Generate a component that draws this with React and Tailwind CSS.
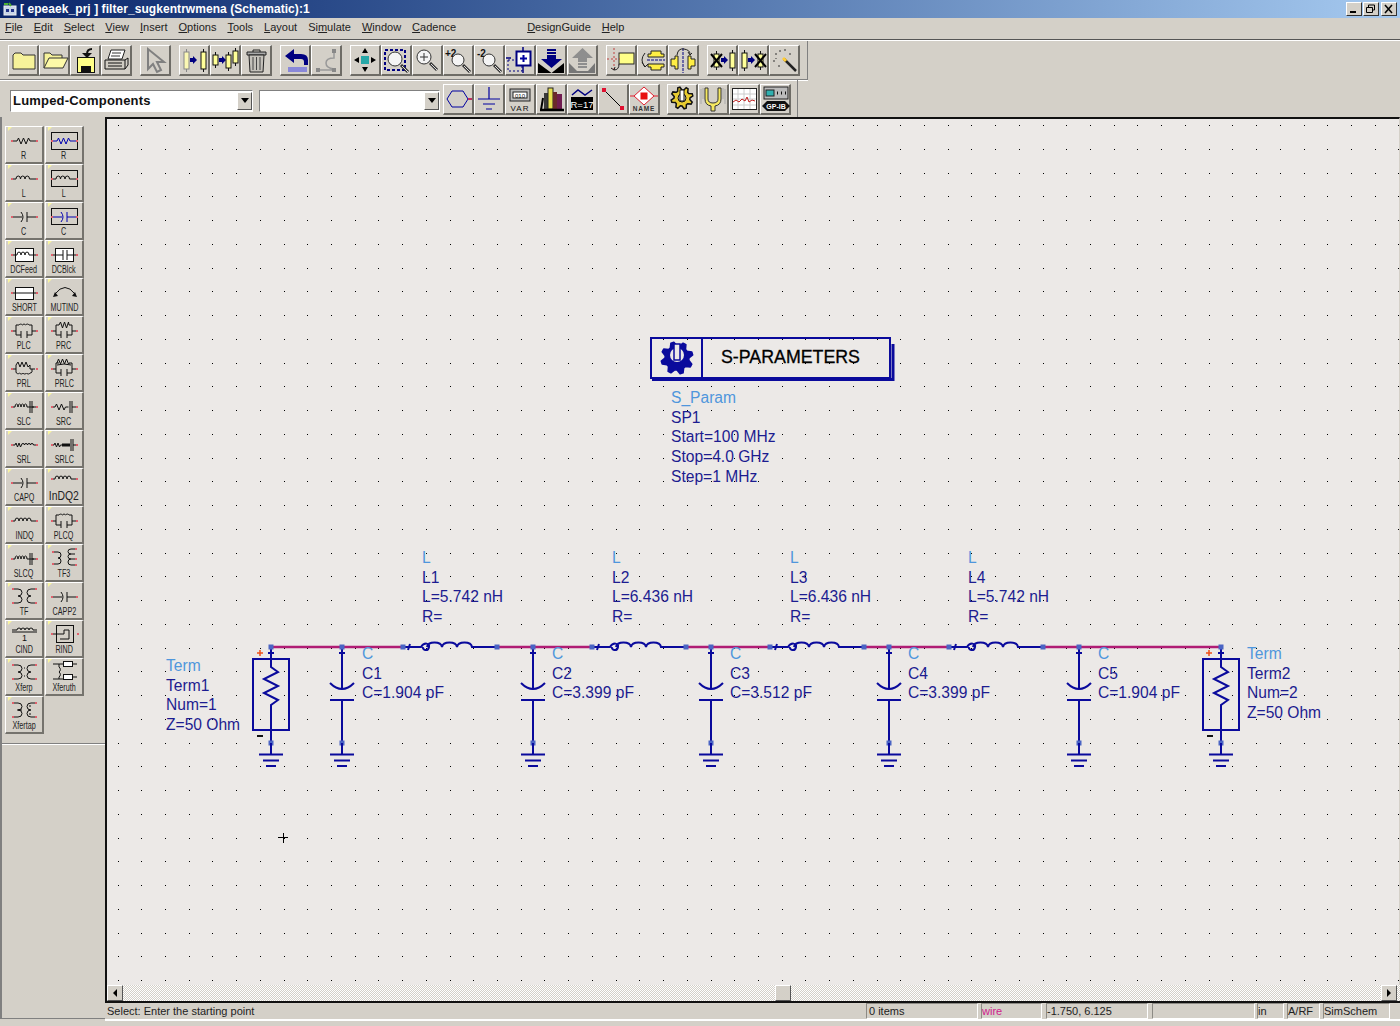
import { Fragment } from 'react'

const NAVY = '#0a0a9c'
const FACE = '#d4d0c8'
const PALE = '#f6f29a'
const PIN = '#e0606c'

// little helpers used by the icon drawings
const gear = (cx, cy, r1, r2, n) => {
  const pts = []
  for (let i = 0; i < n * 4; i++) {
    const a = (i / (n * 4)) * Math.PI * 2 - Math.PI / 8
    const r = i % 4 < 2 ? r2 : r1
    pts.push(`${(cx + r * Math.cos(a)).toFixed(1)},${(cy + r * Math.sin(a)).toFixed(1)}`)
  }
  return pts.join(' ')
}

const Mag = ({ cx = 12, cy = 13, r = 6 }) => (
  <>
    <circle cx={cx} cy={cy} r={r} fill="#f4f4f4" stroke="#333" />
    <path d={`M${cx + r - 1} ${cy + r - 1}l7 7`} stroke="#333" strokeWidth="3" />
    <path d={`M${cx + r} ${cy + r}l6 6`} stroke="#ddd" strokeWidth="1" />
  </>
)

const Cap = ({ x, y, h = 18, w = 5, fill = '#ffff99', stroke = '#111' }) => (
  <>
    <path d={`M${x + w / 2} ${y - 3}V${y + h + 3}`} stroke={stroke} />
    <rect x={x} y={y} width={w} height={h} fill={fill} stroke={stroke} />
  </>
)

const BlueArrow = ({ x = 11, y = 15 }) => (
  <path d={`M${x} ${y - 2}h3v-2l4 4-4 4v-2h-3z`} fill="#000080" />
)

const toolbarIcons = {
  folder: <path d="M5 10l2-2h6l2 2h12v14H5z" fill={PALE} stroke="#333" />,
  open: (
    <>
      <path d="M5 23V8h6l2 2h10v3" fill={PALE} stroke="#333" />
      <path d="M5 23l5-10h19l-5 10z" fill="#fdf9a8" stroke="#333" />
    </>
  ),
  save: (
    <>
      <rect x="7.5" y="12.5" width="17" height="15" fill="#ffff88" stroke="#111" />
      <rect x="11" y="21" width="10" height="7" fill="#111" />
      <path d="M22 4q-5 0-5 5v3" fill="none" stroke="#111" strokeWidth="2" />
      <path d="M12 8l5 5 5-5z" fill="#111" />
    </>
  ),
  print: (
    <>
      <path d="M10 5h14l-3 9H7z" fill="#fff" stroke="#222" />
      <path d="M11 8h9M10 11h9" stroke="#333" />
      <path d="M4 15h20v9H4z" fill="#cfcbc2" stroke="#111" />
      <path d="M24 24l3-4v-7l-3 2M7 18h14M7 21h14" fill="none" stroke="#111" />
    </>
  ),
  pointer: <path d="M8 4v20l5-5 4 8 4-2-4-8h7z" fill={FACE} stroke="#808080" strokeWidth="2" />,
  move1: (
    <>
      <Cap x={5} y={7} h={17} fill="#fbf8b4" stroke="#888" />
      <BlueArrow x={11} />
      <Cap x={22} y={7} h={17} />
    </>
  ),
  move2: (
    <>
      <Cap x={3} y={10} h={10} />
      <BlueArrow x={9} y={15} />
      <Cap x={16} y={10} h={13} />
      <Cap x={23} y={6} h={12} />
    </>
  ),
  trash: (
    <>
      <path d="M6 7h19v3H6z" fill="#aaa" stroke="#222" />
      <path d="M12 7V5h7v2" fill="none" stroke="#222" />
      <path d="M8 10h15l-1 17H9z" fill="#c4c1ba" stroke="#222" />
      <path d="M12 12v13M15.500 12v13M19 12v13" stroke="#444" />
    </>
  ),
  undo: (
    <>
      <path d="M14 4l-9 7 9 7v-4h7q3 0 3 3v3h4v-5q0-6-7-6h-7z" fill="#000080" />
      <path d="M8 22h19v5H8z" fill="#6a6ae0" opacity=".7" />
    </>
  ),
  redo: (
    <>
      <path d="M7 25h15M23 7v6q-8 0-8 5t8 6" fill="none" stroke="#999" strokeWidth="1.500" />
      <rect x="5" y="23" width="4" height="4" fill="#888" />
      <rect x="21" y="23" width="4" height="4" fill="#888" />
      <rect x="21" y="4" width="4" height="4" fill="#888" />
    </>
  ),
  pan: (
    <>
      <rect x="11" y="11" width="8" height="8" fill="#28a8a8" />
      <path d="M15 3l-3 5h6zM15 27l-3-5h6zM4 15l5-3v6zM26 15l-5-3v6z" fill="#000" />
    </>
  ),
  zoomArea: (
    <>
      <rect x="4" y="5" width="20" height="20" fill="none" stroke="#000080" strokeWidth="2" strokeDasharray="3 2" />
      <Mag cx={14} cy={14} r={7} />
    </>
  ),
  zoomIn: (
    <>
      <Mag cx={12} cy={12} r={7} />
      <path d="M8 12h8M12 8v8" stroke="#333" />
    </>
  ),
  zoom2: (
    <>
      <text x="2" y="12" fontSize="10" fontWeight="700" fontFamily="Liberation Sans, sans-serif" fill="#111">+2</text>
      <Mag cx={15} cy={15} r={6} />
    </>
  ),
  zoomOut: (
    <>
      <text x="3" y="12" fontSize="10" fontWeight="700" fontFamily="Liberation Sans, sans-serif" fill="#111">-2</text>
      <Mag cx={15} cy={15} r={6} />
    </>
  ),
  fit: (
    <>
      <rect x="3" y="15" width="14" height="11" fill="none" stroke="#000080" strokeDasharray="2 2" />
      <rect x="11.500" y="6.500" width="14" height="14" fill="#fff" stroke="#000080" strokeWidth="2" />
      <path d="M15 13.500h7M18.500 10v7" stroke="#0000a0" strokeWidth="2" />
      <path d="M1 13h5M18 2v4M18 21v7" stroke="#000080" strokeWidth="1.500" />
    </>
  ),
  pushDown: (
    <>
      <path d="M11 4h9v2h-9zM11 7h9v2h-9zM11 10h9v4h6L15.500 23 5 14h6z" fill="#000080" />
      <path d="M2 18l13.500 10L28 18v10H2z" fill="#000" />
    </>
  ),
  popUp: (
    <>
      <path d="M15.500 3L26 13h-6v4h-9v-4H5z" fill="#8e8e8e" />
      <path d="M11 18h9v2h-9zM11 21h9v2h-9z" fill="#8e8e8e" />
      <path d="M2 18l8 8h11l7-8v10H2z" fill="#777" />
    </>
  ),
  snapPin: (
    <>
      <rect x="13" y="8" width="15" height="11" fill="#ffff88" stroke="#222" />
      <path d="M1 14h13M8 3v24" stroke="#c04040" strokeDasharray="2 2" />
      <path d="M13 19q0 6-5 6M5 23l3 2 1-3" fill="none" stroke="#222" />
    </>
  ),
  rotate: (
    <>
      <path d="M14 6h10v3h3v3H11V9h3zM11 19h16v3h-3v3H14v-3h-3z" fill="#ffee44" stroke="#222" />
      <path d="M10 15h18" stroke="#000080" strokeDasharray="3 1" />
      <path d="M8 8q-6 7 0 14M5 17l3 5 3-3" fill="none" stroke="#222" />
    </>
  ),
  flip: (
    <>
      <path d="M3 14h4v-3h3v13H7v-3H3zM27 14h-4v-3h-3v13h3v-3h4z" fill="#ffee44" stroke="#222" />
      <path d="M15 3v25" stroke="#000080" strokeDasharray="3 1" />
      <path d="M9 10q1-7 7-6t6 5M20 7l2 3 2-2" fill="none" stroke="#222" />
    </>
  ),
  deact1: (
    <>
      <Cap x={7} y={9} h={13} />
      <path d="M4 9l11 13M15 9L4 22" stroke="#000" strokeWidth="2" />
      <BlueArrow x={14} />
      <Cap x={23} y={8} h={15} />
    </>
  ),
  deact2: (
    <>
      <Cap x={4} y={8} h={15} />
      <BlueArrow x={10} />
      <Cap x={20} y={9} h={13} />
      <path d="M17 9l11 13M28 9L17 22" stroke="#000" strokeWidth="2" />
    </>
  ),
  wand: (
    <>
      <path d="M15 14l12 12" stroke="#222" strokeWidth="2.500" />
      <path d="M14 13l3 3" stroke="#ffcc33" strokeWidth="3" />
      <path d="M6 9h2M15 5h2M20 9h2M4 16h2M9 21h2M11 5v2M7 13v1" stroke="#333" />
    </>
  ),
  port: (
    <>
      <path d="M4 15l5-8h11l5 8-5 8H9z" fill="none" stroke="#0000a0" />
      <path d="M25 15h4" stroke="#c03060" strokeWidth="2" />
    </>
  ),
  ground: (
    <path d="M15 3v12M4 15h22M9 20h12M12 25h6" stroke="#0000a0" fill="none" strokeWidth="1.200" />
  ),
  var: (
    <>
      <rect x="5" y="5" width="20" height="12" fill="#bbb" stroke="#222" />
      <rect x="8" y="8" width="14" height="6" fill="#fff" stroke="#222" />
      <text x="15" y="13.500" textAnchor="middle" fontSize="6" fontFamily="Liberation Sans, sans-serif" fill="#111">010</text>
      <text x="15" y="27" textAnchor="middle" fontSize="8" letterSpacing="1" fontFamily="Liberation Sans, sans-serif" fill="#111">VAR</text>
    </>
  ),
  books: (
    <>
      <rect x="8" y="9" width="4" height="16" fill="#3a3a3a" />
      <rect x="12" y="4" width="5" height="21" fill="#e8e050" stroke="#222" />
      <rect x="17" y="8" width="4" height="17" fill="#6a2a2a" />
      <rect x="21" y="10" width="5" height="15" fill="#701c50" />
      <path d="M4 26h24" stroke="#000" strokeWidth="2.500" />
      <path d="M7 14l-2 12" stroke="#000" strokeWidth="2" />
    </>
  ),
  rval: (
    <>
      <path d="M5 11l6-5 7 5 7-5" fill="none" stroke="#000080" strokeWidth="1.500" />
      <rect x="4" y="13" width="22" height="13" fill="#000" />
      <text x="15" y="23.500" textAnchor="middle" fontSize="9.500" fontFamily="Liberation Sans, sans-serif" fill="#fff">R=17</text>
    </>
  ),
  line: (
    <>
      <path d="M6 6l18 18" stroke="#000" />
      <rect x="4" y="4" width="4" height="4" fill="#e01030" />
      <rect x="22" y="22" width="4" height="4" fill="#e01030" />
    </>
  ),
  name: (
    <>
      <path d="M15 3l10 9-10 9-10-9z" fill="#fff" stroke="#e02030" />
      <rect x="11.500" y="8.500" width="7" height="7" fill="#e81010" />
      <path d="M1 12h4M25 12h4" stroke="#e02030" />
      <text x="15" y="27" textAnchor="middle" fontSize="6.500" letterSpacing=".8" fontWeight="700" fontFamily="Liberation Sans, sans-serif" fill="#333">NAME</text>
    </>
  ),
  gear: (
    <>
      <polygon points={gear(15, 14, 8, 11, 8)} fill="#e8cc30" stroke="#111" strokeWidth="1.500" />
      <circle cx="15" cy="14" r="4" fill="#e4e0d0" stroke="#111" />
      <rect x="13" y="6" width="4" height="11" fill="#fff" stroke="#111" />
    </>
  ),
  fork: (
    <>
      <path d="M10 4v11q0 4 5 4t5-4V4h3v11q0 6-6 7v5h-4v-5q-6-1-6-7V4z" fill="#f5e860" stroke="#333" />
      <path d="M3 5v15M27 5v15M5 4v11M25 4v11" stroke="#aaa" />
    </>
  ),
  chart: (
    <>
      <rect x="3.500" y="4.500" width="24" height="21" fill="#fff" stroke="#222" />
      <path d="M4 10h23M4 15h23M4 21h23M9 5v20M15 5v20M21 5v20" stroke="#ccc" />
      <path d="M4 18l3-2 3 2 3-3 3 2 2-4 2 5 3-2 3 1" fill="none" stroke="#c02020" />
    </>
  ),
  gpib: (
    <>
      <rect x="4" y="3" width="24" height="12" fill="#bbb" stroke="#222" />
      <rect x="6" y="6" width="8" height="6" fill="#30b0b0" stroke="#222" />
      <path d="M17 9h2M21 9h2M25 9h2" stroke="#111" strokeWidth="3" strokeDasharray="1 1" />
      <path d="M2 22l5-5h18l5 5-5 5H7z" fill="#111" />
      <text x="16" y="25" textAnchor="middle" fontSize="7" fontWeight="700" fontFamily="Liberation Sans, sans-serif" fill="#fff">GP-IB</text>
    </>
  ),
}

const toolbarOne = [
  ['folder', 'open', 'save', 'print'],
  ['pointer'],
  ['move1', 'move2', 'trash'],
  ['undo', 'redo'],
  ['pan', 'zoomArea', 'zoomIn', 'zoom2', 'zoomOut', 'fit', 'pushDown', 'popUp'],
  ['snapPin', 'rotate', 'flip'],
  ['deact1', 'deact2', 'wand'],
]
const toolbarTwoA = ['port', 'ground', 'var', 'books', 'rval', 'line', 'name']
const toolbarTwoB = ['gear', 'fork', 'chart', 'gpib']

function ToolButton({ name }) {
  return (
    <div className="w-[31px] h-[31px] shrink-0 bg-[#d4d0c8] border-t border-l border-t-white border-l-white border-r-2 border-b-2 border-r-[#6e6c66] border-b-[#6e6c66]">
      <svg width="30" height="30" viewBox="0 0 30 30" fill="none" className="-mt-px -ml-px">
        {toolbarIcons[name]}
      </svg>
    </div>
  )
}

// ---- palette ----
const Pin = ({ x, y }) => <path d={`M${x - 1} ${y}h2`} stroke={PIN} strokeWidth="2" />
const Ends = ({ y = 15, a = 7, b = 32 }) => (
  <>
    <Pin x={a} y={y} />
    <Pin x={b} y={y} />
  </>
)
const Res = ({ x = 11, y = 15, c = '#111' }) => (
  <path d={`M${x - 4} ${y}H${x + 1}l1.500-3 2.500 6 2.500-6 2.500 6 2.500-6 1.500 3H${x + 21}`} fill="none" stroke={c} />
)
const Coil = ({ x = 11, y = 15, n = 3, c = '#111', d = 4.500 }) => {
  let s = `M${x - 4} ${y}H${x}`
  for (let i = 0; i < n; i++) s += `a${d / 2} 3 0 0 1 ${d} 0`
  s += `H${x + n * d + 7}`
  return <path d={s} fill="none" stroke={c} />
}
const CapSym = ({ c = '#111', c2 = '#111' }) => (
  <>
    <path d="M7 15H17M16 10q4 5 0 10" fill="none" stroke={c} />
    <path d="M22 10v10M22 15H32" fill="none" stroke={c2} />
  </>
)
const Tank = ({ top }) => (
  <>
    <path d="M7 15h4V9h3M24 9h3v6h5M11 15v4h5M27 15v4h-5" fill="none" stroke="#111" />
    <path d="M16 15v7M22 15v7" stroke="#111" />
    {top}
    <Ends y={15} />
  </>
)
const Xf = ({ mid }) => (
  <>
    <path d="M8 7h5q4 0 4 3.500t-4 3.500q4 0 4 3.500t-4 3.500H8" fill="none" stroke="#111" />
    <path d="M31 7h-5q-4 0-4 3.500t4 3.500q-4 0-4 3.500t4 3.500h5" fill="none" stroke="#111" />
    {mid}
    <Pin x={8} y={7} />
    <Pin x={8} y={21} />
    <Pin x={31} y={7} />
    <Pin x={31} y={21} />
  </>
)

const paletteRows = [
  [
    ['R', <><Res /><Ends /></>],
    ['R', <><rect x="6.500" y="6.500" width="26" height="17" stroke="#111" /><Res c="#0000b0" /><Ends /></>],
  ],
  [
    ['L', <><Coil /><Ends /></>],
    ['L', <><rect x="6.500" y="6.500" width="26" height="16" stroke="#111" /><Coil /><Ends /></>],
  ],
  [
    ['C', <><CapSym /><Ends /></>],
    ['C', <><rect x="6.500" y="6.500" width="26" height="16" stroke="#111" /><CapSym c="#0000b0" c2="#0000b0" /><Ends /></>],
  ],
  [
    ['DCFeed', <><rect x="10.500" y="8.500" width="18" height="13" fill="#fff" stroke="#111" /><Coil x={12} n={3} d={4} /><Ends /></>],
    ['DCBlck', <><rect x="10.500" y="8.500" width="18" height="13" fill="#fff" stroke="#111" /><path d="M6 15h12M18 10v10M22 10v10M22 15h11" stroke="#111" /><Ends /></>],
  ],
  [
    ['SHORT', <><rect x="10.500" y="9.500" width="18" height="12" fill="#fff" stroke="#111" /><path d="M6 15h27" stroke="#111" /><Ends /></>],
    ['MUTIND', <><path d="M10 16q10-13 20 0" stroke="#111" fill="none" /><path d="M8 19l2-5 3 4zM32 19l-2-5-3 4z" fill="#111" /></>],
  ],
  [
    ['PLC', <Tank top={<path d="M14 9a2 2 0 0 1 3.300 0a2 2 0 0 1 3.300 0a2 2 0 0 1 3.400 0" stroke="#111" />} />],
    ['PRC', <Tank top={<path d="M14 9l1.500-3 2 6 2-6 2 6 2-6 .5 3" stroke="#111" />} />],
  ],
  [
    ['PRL', <><path d="M7 15h4V11l2-3 2 5 2-5 2 5 2-5 2 5 2-2v4h5M11 15v3a2 2 0 0 0 3.500 1a2 2 0 0 0 3.500 0a2 2 0 0 0 3.500 0a2 2 0 0 0 3.500 0a2 2 0 0 0 2-1v-3" fill="none" stroke="#111" /><Ends /></>],
    ['PRLC', <Tank top={<path d="M12 9l1.500-4 2 5 2-5 2 5 2-5 2 5 1-1M12 11q7-2 14 0" stroke="#111" />} />],
  ],
  [
    ['SLC', <><Coil x={10} n={4} d={3} /><path d="M25 9v12M27 9v12M27 15h5" stroke="#111" /><Ends /></>],
    ['SRC', <><path d="M7 15h3l1.500-3 2.500 6 2.500-6 2.500 6 1.500-3h3M25 9v12M27 9v12M27 15h5" fill="none" stroke="#111" /><Ends /></>],
  ],
  [
    ['SRL', <><path d="M7 15h3l1-2 1.500 4 1.500-4 1.500 4 1-2a1.500 1.500 0 0 1 3 0a1.500 1.500 0 0 1 3 0a1.500 1.500 0 0 1 3 0a1.500 1.500 0 0 1 3 0h3" fill="none" stroke="#111" /><Ends /></>],
    ['SRLC', <><path d="M7 15h2l1-2 1.500 4 1.500-4 1.500 4 1-2h9M26 9v12M28 9v12M28 15h4" fill="none" stroke="#111" /><path d="M17 13.500h8v3h-8z" fill="#111" /><Ends /></>],
  ],
  [
    ['CAPQ', <><CapSym /><Ends /></>],
    ['InDQ2', <><Coil x={10} y={11} n={4} d={4} /><Ends y={11} /></>],
  ],
  [
    ['INDQ', <><Coil x={10} n={4} d={4} /><Ends /></>],
    ['PLCQ', <Tank top={<path d="M14 9a2 2 0 0 1 3.300 0a2 2 0 0 1 3.300 0a2 2 0 0 1 3.400 0" stroke="#111" />} />],
  ],
  [
    ['SLCQ', <><Coil x={10} n={4} d={3} /><path d="M25 9v12M27 9v12M27 15h5" stroke="#111" /><Ends /></>],
    ['TF3', <><path d="M8 8h5q3 0 3 3t-3 3q3 0 3 3t-3 3H8" fill="none" stroke="#111" /><path d="M30 5h-4q-3 0-3 2.500t3 2.500h4M26 10q-3 0-3 2.500t3 2.500h4M26 15q-3 0-3 3t3 3h4" fill="none" stroke="#111" /><Pin x={8} y={8} /><Pin x={8} y={20} /><Pin x={31} y={5} /><Pin x={31} y={15} /><Pin x={31} y={21} /></>],
  ],
  [
    ['TF', <Xf />],
    ['CAPP2', <><CapSym /><Ends /></>],
  ],
  [
    ['CIND', <><path d="M7 10h5a2 2 0 0 1 4 0a2 2 0 0 1 4 0a2 2 0 0 1 4 0a2 2 0 0 1 4 0h4M7 12h25" fill="none" stroke="#111" /><text x="19.500" y="21" fontSize="9" textAnchor="middle" fontFamily="Liberation Sans, sans-serif" fill="#111">1</text></>],
    ['RIND', <><rect x="11.500" y="5.500" width="17" height="17" fill="none" stroke="#111" /><path d="M7 14h12V10h5v9H15" fill="none" stroke="#111" /><Ends y={14} b={33} /></>],
  ],
  [
    ['Xferp', <Xf mid={<path d="M19 10h2M19 18h2" stroke="#111" strokeDasharray="1 1" />} />],
    ['Xferuth', <><path d="M8 6h6v3a3 3 0 0 1 0 5a3 3 0 0 1 0 5v2H8M14 6h5M14 21h5M28 6h4M28 19h4" fill="none" stroke="#111" /><rect x="18.500" y="3.500" width="9" height="5" fill="#fff" stroke="#111" /><rect x="18.500" y="16.500" width="9" height="5" fill="#fff" stroke="#111" /></>],
  ],
  [
    ['Xfertap', <Xf mid={<path d="M12 14h5M24 10h2M24 18h2" stroke="#111" />} />],
  ],
]

function PaletteButton({ label, icon }) {
  return (
    <div className="relative w-[39px] h-[38px] shrink-0 bg-[#d4d0c8] border-t border-l border-t-white border-l-white border-r-2 border-b-2 border-r-[#75736d] border-b-[#75736d] flex flex-col items-center">
      <svg width="38" height="24" viewBox="0 0 38 24" fill="none" className="-ml-px -mt-px shrink-0">
        <path d="M3 1h4L3 5z" fill="#f8f4a0" />
        {icon}
      </svg>
      {label === 'InDQ2' ? (
        <span className="-mt-[3px] text-[13px] leading-[13px] text-[#222] inline-block scale-x-[0.8] whitespace-nowrap">
          {label}
        </span>
      ) : (
        <span className="mt-0 text-[10px] leading-[11px] text-[#222] inline-block scale-x-[0.72] whitespace-nowrap">
          {label}
        </span>
      )}
    </div>
  )
}

// ---- schematic ----
const DOTS = []
for (let i = 0; i < 55; i++) {
  for (let j = 0; j < 37; j++) {
    DOTS.push(`M${Math.round(117.5 + i * 23.72)} ${Math.round(125 + j * 23.75)}h1v1h-1z`)
  }
}
const dotPath = DOTS.join('')

const WIRE = '#b01c74'
const NODE = '#4a64c4'

const Node = ({ x, y }) => <rect x={x - 2.5} y={y - 2.5} width="5" height="5" fill={NODE} />

const Ground = ({ x }) => (
  <path d={`M${x} 743V754M${x - 12} 754.500H${x + 12}M${x - 8} 760.500H${x + 8}M${x - 5} 766H${x + 5}`} stroke={NAVY} strokeWidth="2" fill="none" />
)

const Capacitor = ({ x }) => (
  <g>
    <path d={`M${x} 647V690M${x - 12} 683Q${x} 695 ${x + 12} 683M${x - 12} 700H${x + 12}M${x} 700V743M${x - 3} 653H${x + 3}`} stroke={NAVY} strokeWidth="2" fill="none" />
    <Node x={x} y={647} />
    <Node x={x} y={743} />
    <Ground x={x} />
  </g>
)

const Inductor = ({ x }) => {
  const left = x + 18
  return (
    <g>
      <path
        d={`M${x} 647H${left}c3-5 9-4 8 0c-1 5-7 3-6 0M${left + 6} 647c1-6 14-6 15 0c1-6 14-6 15 0c1-6 14-6 15 0H${x + 94}M${x + 7} 644l-2 6`}
        stroke={NAVY}
        strokeWidth="2"
        fill="none"
      />
      <Node x={x} y={647} />
      <Node x={x + 94} y={647} />
    </g>
  )
}

const Term = ({ x, plusX, minusX }) => (
  <g>
    <rect x={x - 18} y="659" width="36" height="71" stroke={NAVY} strokeWidth="2" fill="none" />
    <path d={`M${x} 647V667l7 5-14 7 14 7-14 7 14 7-7 5V743M${x - 3} 653H${x + 3}`} stroke={NAVY} strokeWidth="2" fill="none" />
    <path d={`M${plusX - 3} 653h6M${plusX} 650v6`} stroke="#f05018" strokeWidth="1.500" />
    <path d={`M${minusX - 3} 736h6`} stroke="#111" strokeWidth="2" />
    <Node x={x} y={647} />
    <Node x={x} y={743} />
    <Ground x={x} />
  </g>
)

const Label = ({ x, y, lines }) => (
  <text x={x} y={y} fontSize="15.600" fontFamily="Liberation Sans, sans-serif" fill="#1c1c90">
    {lines.map((l, i) => (
      <tspan key={i} x={x} y={y + i * 19.7} fill={i === 0 ? '#4f96dc' : '#1c1c90'}>
        {l}
      </tspan>
    ))}
  </text>
)

const caps = [
  [342, 'C1', 'C=1.904 pF', 362],
  [533, 'C2', 'C=3.399 pF', 552],
  [711, 'C3', 'C=3.512 pF', 730],
  [889, 'C4', 'C=3.399 pF', 908],
  [1079, 'C5', 'C=1.904 pF', 1098],
]
const inds = [
  [403, 'L1', 'L=5.742 nH', 422],
  [592, 'L2', 'L=6.436 nH', 612],
  [770, 'L3', 'L=6.436 nH', 790],
  [949, 'L4', 'L=5.742 nH', 968],
]

function Schematic() {
  return (
    <svg width="1292" height="867" viewBox="107 119 1292 867" fill="none" className="block">
      <path d={dotPath} fill="#000" />

      {/* wires */}
      <path d="M271 647H403M497 647H592M686 647H770M864 647H949M1043 647H1221" stroke={WIRE} strokeWidth="2.500" />

      {inds.map(([x]) => (
        <Inductor key={x} x={x} />
      ))}
      {caps.map(([x]) => (
        <Capacitor key={x} x={x} />
      ))}
      <Term x={271} plusX={260} minusX={260} />
      <Term x={1221} plusX={1209} minusX={1210} />

      {/* S-parameters block */}
      <rect x="651" y="338" width="239" height="40" fill="none" stroke={NAVY} strokeWidth="2" />
      <path d="M652 379.500H893V344" stroke={NAVY} strokeWidth="3" fill="none" />
      <path d="M702 338V378" stroke={NAVY} strokeWidth="2" />
      <polygon points={gear(677, 358, 12, 16, 8)} fill={NAVY} stroke={NAVY} strokeWidth="1.500" strokeLinejoin="round" />
      <circle cx="677" cy="355" r="7" fill="#ece9e7" />
      <path d="M674 344h6v16h-6z" fill="#ece9e7" stroke={NAVY} strokeWidth="1.500" />
      <text x="721" y="363" fontSize="17.800" fontFamily="Liberation Sans, sans-serif" fill="#000" stroke="#000" strokeWidth=".3">
        S-PARAMETERS
      </text>

      <Label x={671} y={403} lines={['S_Param', 'SP1', 'Start=100 MHz', 'Stop=4.0 GHz', 'Step=1 MHz']} />
      <Label x={166} y={671} lines={['Term', 'Term1', 'Num=1', 'Z=50 Ohm']} />
      <Label x={1247} y={659} lines={['Term', 'Term2', 'Num=2', 'Z=50 Ohm']} />
      {caps.map(([x, n, v, lx]) => (
        <Label key={x} x={lx} y={659} lines={['C', n, v]} />
      ))}
      {inds.map(([x, n, v, lx]) => (
        <Label key={x} x={lx} y={563} lines={['L', n, v, 'R=']} />
      ))}

      {/* cursor */}
      <path d="M278 837.500h10M283.500 833v10" stroke="#000" />
    </svg>
  )
}

const menus = [
  ['', 'F', 'ile'],
  ['', 'E', 'dit'],
  ['', 'S', 'elect'],
  ['', 'V', 'iew'],
  ['', 'I', 'nsert'],
  ['', 'O', 'ptions'],
  ['', 'T', 'ools'],
  ['', 'L', 'ayout'],
  ['Si', 'm', 'ulate'],
  ['', 'W', 'indow'],
  ['', 'C', 'adence'],
]

function Menu({ parts }) {
  return (
    <span>
      {parts[0]}
      <span className="underline">{parts[1]}</span>
      {parts[2]}
    </span>
  )
}

function WinButton({ children }) {
  return (
    <div className="w-[16px] h-[14px] bg-[#d4d0c8] border-t border-l border-t-white border-l-white border-r border-b border-r-[#333] border-b-[#333] flex items-center justify-center">
      <svg width="12" height="10" viewBox="0 0 12 10" fill="none">
        {children}
      </svg>
    </div>
  )
}

function Pane({ className, children }) {
  return (
    <div className={`h-[16px] border-t border-l border-t-[#8c8a84] border-l-[#8c8a84] border-r border-b border-r-white border-b-white leading-[14px] whitespace-nowrap ${className}`}>
      {children}
    </div>
  )
}

function ScrollArrow({ dir }) {
  return (
    <div className="w-[16px] h-[16px] shrink-0 bg-[#d4d0c8] border-t border-l border-t-white border-l-white border-r border-b border-r-[#555] border-b-[#555] flex items-center justify-center">
      <svg width="6" height="8" viewBox="0 0 6 8">
        <path d={dir === 'left' ? 'M5 0v8L1 4z' : 'M1 0v8l4-4z'} fill="#000" />
      </svg>
    </div>
  )
}

function ScrollDown() {
  return (
    <div className="w-[15px] h-[18px] shrink-0 bg-[#d4d0c8] border-t border-l border-t-white border-l-white border-r border-b border-r-[#555] border-b-[#555] flex items-center justify-center">
      <svg width="8" height="5" viewBox="0 0 8 5">
        <path d="M0 0h8L4 5z" fill="#000" />
      </svg>
    </div>
  )
}

export default function App() {
  return (
    <div className="w-[1400px] h-[1026px] overflow-hidden flex flex-col bg-[#d4d0c8] text-[#111] text-[11px] [font-family:'Liberation_Sans',sans-serif]">
      {/* title bar */}
      <div className="h-[18px] shrink-0 flex items-center justify-between bg-gradient-to-r from-[#0a246a] to-[#a6caf0] pl-[3px] pr-[3px]">
        <div className="flex items-center gap-[3px]">
          <svg width="14" height="14" viewBox="0 0 14 14" fill="none">
            <rect x="1" y="4" width="12" height="9" fill="#c8d4e8" stroke="#eee" />
            <path d="M3 7h3v3H3zM8 7h3v3H8z" fill="#223388" />
            <path d="M1 2h4M6 1l2 3" stroke="#4caf30" strokeWidth="2" />
          </svg>
          <span className="text-white font-bold text-[12px] tracking-[0.06px] leading-[18px] whitespace-nowrap">[ epeaek_prj ] filter_sugkentrwmena (Schematic):1</span>
        </div>
        <div className="flex items-center">
          <WinButton><path d="M2 8h6" stroke="#000" strokeWidth="2" /></WinButton>
          <div className="w-px" />
          <WinButton><path d="M3.500 3V1h6v5h-2M1.500 3.500h6v5h-6z" stroke="#000" /></WinButton>
          <div className="w-[2px]" />
          <WinButton><path d="M2 1l7 8M9 1L2 9" stroke="#000" strokeWidth="1.500" /></WinButton>
        </div>
      </div>

      {/* menu bar */}
      <div className="h-[21px] shrink-0 flex items-center pl-[5px] pb-[2px] gap-[11px] text-[11px] text-[#222]">
        {menus.map((m) => (
          <Menu key={m[1] + m[2]} parts={m} />
        ))}
        <div className="w-[49px]" />
        <Menu parts={['', 'D', 'esignGuide']} />
        <Menu parts={['', 'H', 'elp']} />
      </div>
      <div className="h-[2px] shrink-0 border-t border-b border-t-[#555] border-b-white" />

      {/* first toolbar */}
      <div className="w-[808px] h-[39px] shrink-0 border-r border-b border-r-[#808080] border-b-[#808080] shadow-[0_1px_0_#fff] flex items-start pl-[8px] pt-[4px] gap-[8px]">
        {toolbarOne.map((group, i) => (
          <div key={i} className="flex">
            {group.map((n) => (
              <ToolButton key={n} name={n} />
            ))}
          </div>
        ))}
      </div>

      {/* second toolbar */}
      <div className="w-[798px] h-[37px] shrink-0 flex items-center pl-[10px] border-r border-r-[#808080]">
        <div className="w-[243px] h-[22px] shrink-0 mt-[4px] bg-white border-t border-l border-t-[#808080] border-l-[#808080] border-r border-b border-r-white border-b-white flex items-center justify-between pl-[2px]">
          <span className="font-bold text-[13px] tracking-[0.2px]">Lumped-Components</span>
          <ScrollDown />
        </div>
        <div className="w-[181px] h-[22px] shrink-0 mt-[4px] ml-[6px] bg-white border-t border-l border-t-[#808080] border-l-[#808080] border-r border-b border-r-white border-b-white flex items-center justify-end">
          <ScrollDown />
        </div>
        <div className="flex ml-[3px] mt-[2px]">
          {toolbarTwoA.map((n) => (
            <ToolButton key={n} name={n} />
          ))}
        </div>
        <div className="flex ml-[7px] mt-[2px]">
          {toolbarTwoB.map((n) => (
            <ToolButton key={n} name={n} />
          ))}
        </div>
      </div>

      {/* main area */}
      <div className="flex-1 min-h-0 flex">
        {/* palette */}
        <div className="w-[105px] shrink-0 flex flex-col border-l-2 border-b border-l-[#808080] border-b-[#808080] mb-[7px]">
          <div className="h-[616px] shrink-0 pt-[9px] pl-[3px] flex flex-col">
            {paletteRows.map((row, i) => (
              <div key={i} className="flex gap-px">
                {row.map(([label, icon], j) => (
                  <Fragment key={j}>
                    <PaletteButton label={label} icon={icon} />
                  </Fragment>
                ))}
              </div>
            ))}
          </div>
          <div className="h-[2px] mt-[10px] shrink-0 border-t border-b border-t-[#808080] border-b-white" />
        </div>

        {/* canvas, scrollbar and status */}
        <div className="flex-1 min-w-0 flex flex-col">
          <div className="flex-1 min-h-0 overflow-hidden bg-[#ece9e7] border-l-2 border-t-2 border-r border-l-[#111] border-t-[#111] border-r-[#d4d0c8]">
            <Schematic />
          </div>
          <div className="h-[18px] shrink-0 flex items-center pr-[3px] border-l-2 border-b-2 border-l-[#111] border-b-[#111] bg-[repeating-conic-gradient(#d4d0c8_0_25%,#ffffff_0_50%)] bg-[length:2px_2px]">
            <ScrollArrow dir="left" />
            <div className="flex-1 flex justify-center pl-[62px]">
              <div className="w-[16px] h-[16px] bg-[#d4d0c8] border-t border-l border-t-white border-l-white border-r border-b border-r-[#555] border-b-[#555]" />
            </div>
            <ScrollArrow dir="right" />
          </div>
          <div className="h-[16px] shrink-0 flex items-center text-[11px] text-[#222]">
            <div className="flex-1 pl-[2px] leading-[14px] whitespace-nowrap">Select: Enter the starting point</div>
            <Pane className="w-[112px] pl-[2px]">0 items</Pane>
            <Pane className="w-[61px] ml-[3px] text-[#d0208c]">wire</Pane>
            <Pane className="w-[102px] ml-[4px]">-1.750, 6.125</Pane>
            <Pane className="w-[103px] ml-[4px]" />
            <Pane className="w-[27px] ml-[2px]">in</Pane>
            <Pane className="w-[33px] ml-[3px]">A/RF</Pane>
            <Pane className="w-[67px] ml-[3px]">SimSchem</Pane>
            <div className="w-[10px]" />
          </div>
          <div className="h-[7px] shrink-0 border-t-2 border-t-white" />
        </div>
      </div>
    </div>
  )
}
